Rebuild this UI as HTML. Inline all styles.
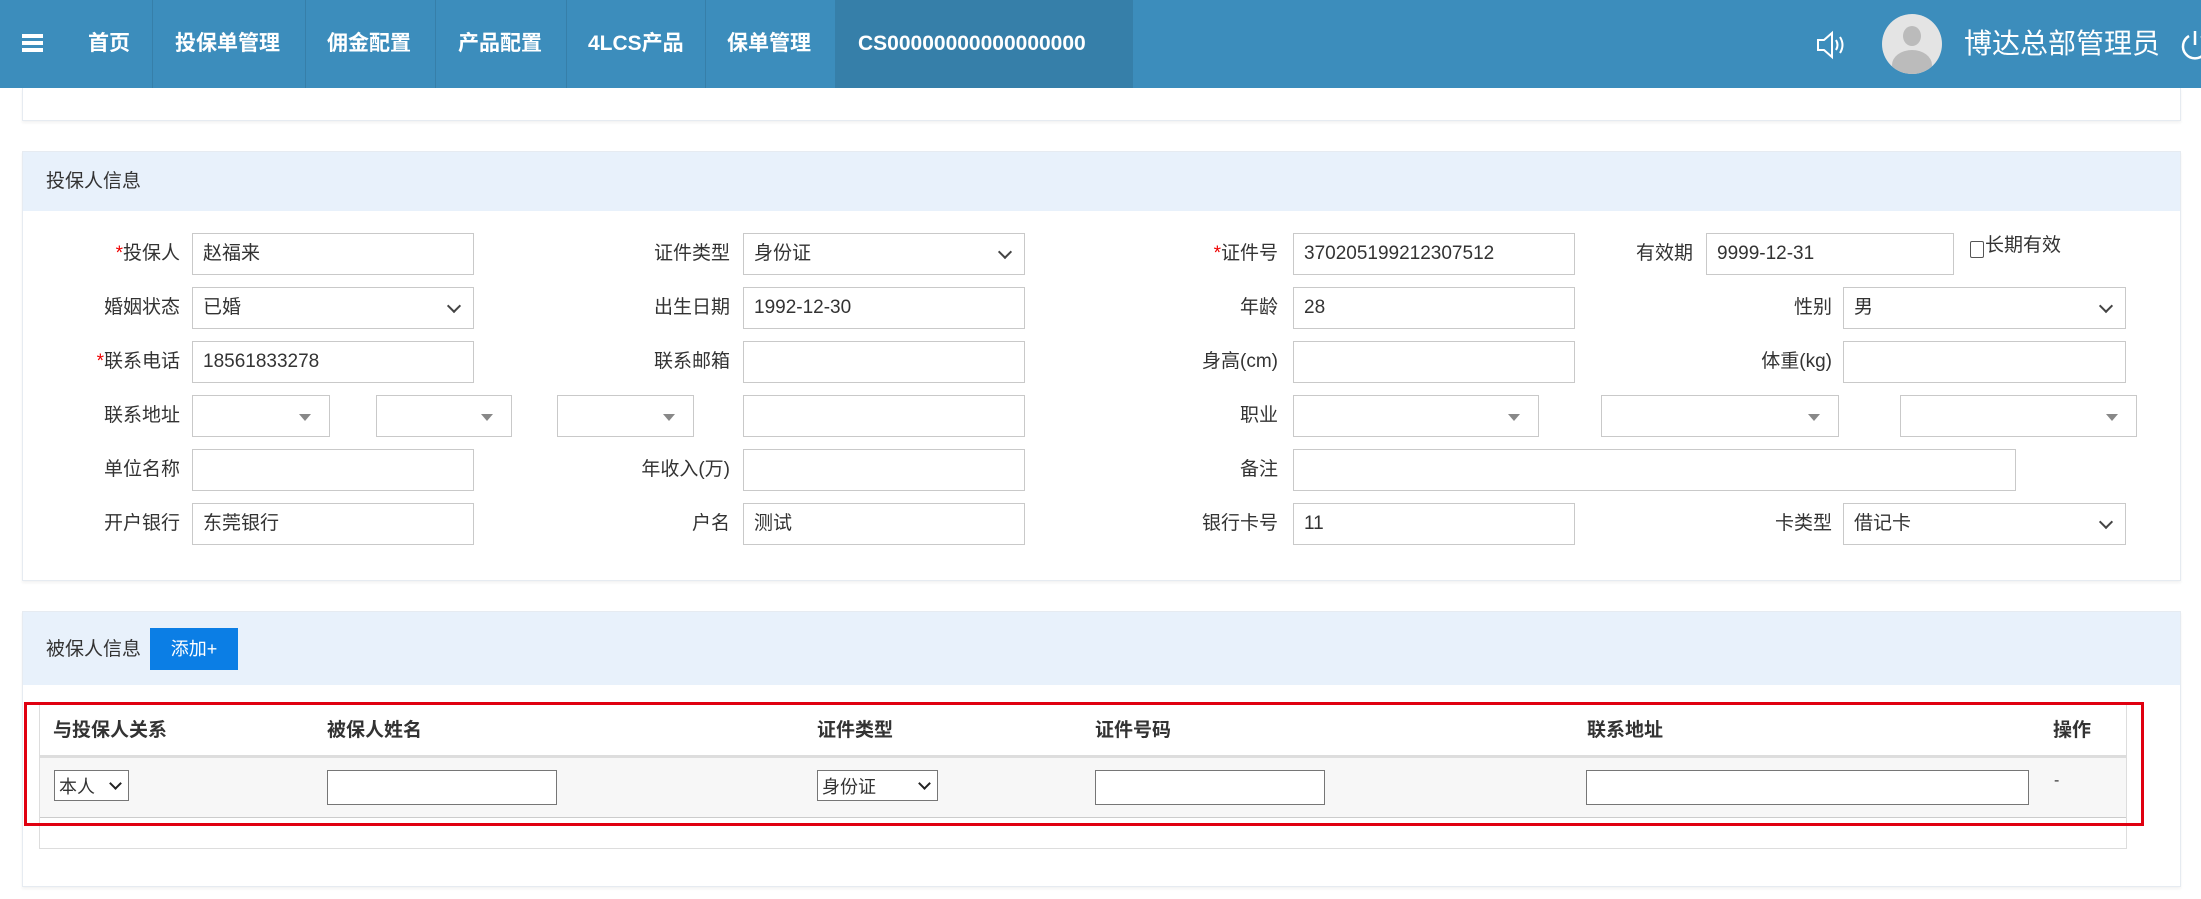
<!DOCTYPE html>
<html><head><meta charset="utf-8">
<style>
*{box-sizing:border-box;margin:0;padding:0}
body{width:2201px;height:899px;overflow:hidden;background:#fff;font-family:"Liberation Sans","Noto Sans CJK SC",sans-serif;color:#333;position:relative}
.a{position:absolute}
.nav{left:0;top:0;width:2201px;height:88px;background:#3c8dbc}
.ni{position:absolute;top:0;height:88px;line-height:88px;color:#fff;font-weight:bold;font-size:21px}
.dv{position:absolute;top:0;width:1px;height:88px;background:#367fa9}
.panel{border:1px solid #e6ebf1;box-shadow:0 2px 3px rgba(0,0,0,0.05)}
.hd{background:#e8f1fb}
.lb{position:absolute;font-size:19px;text-align:right;height:42px;line-height:42px;width:170px}
.in{position:absolute;height:42px;border:1px solid #c9c9c9;background:#fff;font-size:19px;line-height:40px;padding-left:10px;color:#333}
.sel::after{content:"";position:absolute;right:14px;top:13px;width:8px;height:8px;border-right:2px solid #444;border-bottom:2px solid #444;transform:rotate(45deg)}
.s2::after{content:"";position:absolute;right:18px;top:18px;border-left:6px solid transparent;border-right:6px solid transparent;border-top:7px solid #888}
.th{position:absolute;top:706px;height:49px;line-height:49px;font-weight:bold;font-size:19px}
.ti{position:absolute;top:770px;height:35px;border:1px solid #767676;background:#fff;font-size:18px;line-height:33px;padding-left:4px}
.ts::after{content:"";position:absolute;right:8px;top:8px;width:7px;height:7px;border-right:2px solid #222;border-bottom:2px solid #222;transform:rotate(45deg)}
</style></head><body>
<div class="a nav">
  <div class="a" style="left:22px;top:34px;width:21px;height:4px;background:#fff"></div>
  <div class="a" style="left:22px;top:41px;width:21px;height:4px;background:#fff"></div>
  <div class="a" style="left:22px;top:48px;width:21px;height:4px;background:#fff"></div>
  <div class="a" style="left:835px;top:0;width:298px;height:88px;background:#367fa9"></div>
  <div class="ni" style="left:88px">首页</div>
  <div class="ni" style="left:175px">投保单管理</div>
  <div class="ni" style="left:327px">佣金配置</div>
  <div class="ni" style="left:458px">产品配置</div>
  <div class="ni" style="left:588px">4LCS产品</div>
  <div class="ni" style="left:727px">保单管理</div>
  <div class="ni" style="left:858px">CS00000000000000000</div>
  <div class="dv" style="left:152px"></div><div class="dv" style="left:305px"></div><div class="dv" style="left:435px"></div><div class="dv" style="left:566px"></div><div class="dv" style="left:705px"></div>
  <svg class="a" style="left:1815px;top:29px" width="34" height="32" viewBox="0 0 34 32"><path d="M3 11h6l8-7v24l-8-7H3z" fill="none" stroke="#fff" stroke-width="2"/><path d="M21 11q3 5 0 10M25 8q5 8 0 16" fill="none" stroke="#fff" stroke-width="2"/></svg>
  <div class="a" style="left:1882px;top:14px;width:60px;height:60px;border-radius:50%;background:#e4e4e4;overflow:hidden">
    <div class="a" style="left:21px;top:12px;width:18px;height:20px;border-radius:50%;background:#bbb"></div>
    <div class="a" style="left:10px;top:36px;width:40px;height:30px;border-radius:50%;background:#bbb"></div>
  </div>
  <div class="a" style="left:1964px;top:0;height:88px;line-height:88px;color:#fff;font-size:28px">博达总部管理员</div>
  <svg class="a" style="left:2180px;top:28px" width="30" height="34" viewBox="0 0 30 34"><path d="M9 8a12 12 0 1 0 12 0" fill="none" stroke="#fff" stroke-width="2.5"/><path d="M15 3v14" stroke="#fff" stroke-width="2.5"/></svg>
</div>

<div class="a panel" style="left:22px;top:88px;width:2159px;height:33px;border-top:none"></div>

<div class="a panel" style="left:22px;top:151px;width:2159px;height:430px"></div>
<div class="a hd" style="left:23px;top:152px;width:2157px;height:59px"></div>
<div class="a" style="left:46px;top:152px;line-height:59px;font-size:19px">投保人信息</div>

<!-- row1 -->
<div class="lb" style="left:10px;top:233px"><span style="color:#e00">*</span>投保人</div>
<div class="in" style="left:192px;top:233px;width:282px">赵福来</div>
<div class="lb" style="left:560px;top:233px">证件类型</div>
<div class="in sel" style="left:743px;top:233px;width:282px">身份证</div>
<div class="lb" style="left:1108px;top:233px"><span style="color:#e00">*</span>证件号</div>
<div class="in" style="left:1293px;top:233px;width:282px">370205199212307512</div>
<div class="lb" style="left:1523px;top:233px">有效期</div>
<div class="in" style="left:1706px;top:233px;width:248px">9999-12-31</div>
<div class="a" style="left:1970px;top:241px;width:14px;height:17px;border:1.5px solid #555;border-radius:2px"></div>
<div class="a" style="left:1985px;top:233px;line-height:42px;font-size:19px;margin-top:-8px">长期有效</div>
<!-- row2 -->
<div class="lb" style="left:10px;top:287px">婚姻状态</div>
<div class="in sel" style="left:192px;top:287px;width:282px">已婚</div>
<div class="lb" style="left:560px;top:287px">出生日期</div>
<div class="in" style="left:743px;top:287px;width:282px">1992-12-30</div>
<div class="lb" style="left:1108px;top:287px">年龄</div>
<div class="in" style="left:1293px;top:287px;width:282px">28</div>
<div class="lb" style="left:1662px;top:287px">性别</div>
<div class="in sel" style="left:1843px;top:287px;width:283px">男</div>
<!-- row3 -->
<div class="lb" style="left:10px;top:341px"><span style="color:#e00">*</span>联系电话</div>
<div class="in" style="left:192px;top:341px;width:282px">18561833278</div>
<div class="lb" style="left:560px;top:341px">联系邮箱</div>
<div class="in" style="left:743px;top:341px;width:282px"></div>
<div class="lb" style="left:1108px;top:341px">身高(cm)</div>
<div class="in" style="left:1293px;top:341px;width:282px"></div>
<div class="lb" style="left:1662px;top:341px">体重(kg)</div>
<div class="in" style="left:1843px;top:341px;width:283px"></div>
<!-- row4 -->
<div class="lb" style="left:10px;top:395px">联系地址</div>
<div class="in s2" style="left:192px;top:395px;width:138px"></div>
<div class="in s2" style="left:376px;top:395px;width:136px"></div>
<div class="in s2" style="left:557px;top:395px;width:137px"></div>
<div class="in" style="left:743px;top:395px;width:282px"></div>
<div class="lb" style="left:1108px;top:395px">职业</div>
<div class="in s2" style="left:1293px;top:395px;width:246px"></div>
<div class="in s2" style="left:1601px;top:395px;width:238px"></div>
<div class="in s2" style="left:1900px;top:395px;width:237px"></div>
<!-- row5 -->
<div class="lb" style="left:10px;top:449px">单位名称</div>
<div class="in" style="left:192px;top:449px;width:282px"></div>
<div class="lb" style="left:560px;top:449px">年收入(万)</div>
<div class="in" style="left:743px;top:449px;width:282px"></div>
<div class="lb" style="left:1108px;top:449px">备注</div>
<div class="in" style="left:1293px;top:449px;width:723px"></div>
<!-- row6 -->
<div class="lb" style="left:10px;top:503px">开户银行</div>
<div class="in" style="left:192px;top:503px;width:282px">东莞银行</div>
<div class="lb" style="left:560px;top:503px">户名</div>
<div class="in" style="left:743px;top:503px;width:282px">测试</div>
<div class="lb" style="left:1108px;top:503px">银行卡号</div>
<div class="in" style="left:1293px;top:503px;width:282px">11</div>
<div class="lb" style="left:1662px;top:503px">卡类型</div>
<div class="in sel" style="left:1843px;top:503px;width:283px">借记卡</div>

<!-- section 2 -->
<div class="a panel" style="left:22px;top:611px;width:2159px;height:276px"></div>
<div class="a hd" style="left:23px;top:612px;width:2157px;height:73px"></div>
<div class="a" style="left:46px;top:629px;line-height:41px;font-size:19px">被保人信息</div>
<div class="a" style="left:150px;top:628px;width:88px;height:42px;background:#0b7ee5;color:#fff;font-size:18px;line-height:42px;text-align:center">添加+</div>

<div class="a" style="left:39px;top:704px;width:2088px;height:145px;border:1px solid #ddd"></div>
<div class="a" style="left:40px;top:755px;width:2086px;height:3px;background:#ddd"></div>
<div class="a" style="left:40px;top:758px;width:2086px;height:60px;background:#f7f7f7;border-bottom:1px solid #ccc"></div>
<div class="th" style="left:53px">与投保人关系</div>
<div class="th" style="left:327px">被保人姓名</div>
<div class="th" style="left:817px">证件类型</div>
<div class="th" style="left:1095px">证件号码</div>
<div class="th" style="left:1587px">联系地址</div>
<div class="th" style="left:2053px">操作</div>
<div class="ti ts" style="left:54px;width:75px;height:31px">本人</div>
<div class="ti" style="left:327px;width:230px"></div>
<div class="ti ts" style="left:817px;width:121px;height:31px">身份证</div>
<div class="ti" style="left:1095px;width:230px"></div>
<div class="ti" style="left:1586px;width:443px"></div>
<div class="a" style="left:2054px;top:772px;font-size:16px">-</div>

<div class="a" style="left:24px;top:702px;width:2120px;height:124px;border:3px solid #e00010"></div>
</body></html>
